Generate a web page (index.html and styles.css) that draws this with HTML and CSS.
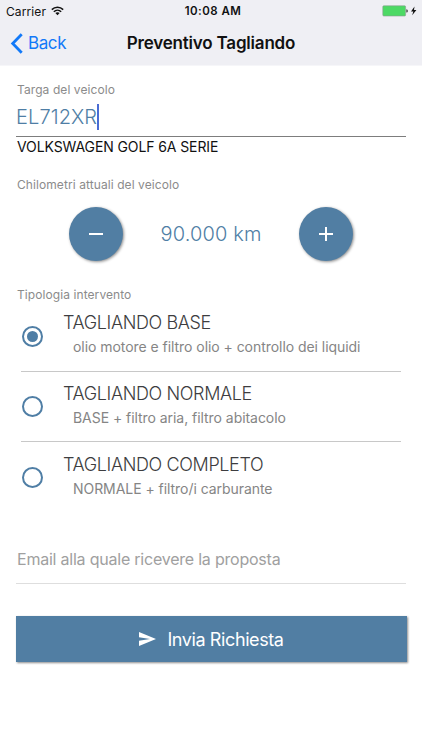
FILE: index.html
```html
<!DOCTYPE html>
<html lang="it">

<head>
    <meta charset="UTF-8">
    <meta name="viewport" content="width=device-width, initial-scale=1.0">
    <title>Preventivo Tagliando</title>
    <link rel="stylesheet" href="styles.css">
</head>

<body>

    <!-- Header -->
    <header class="header">
        <div class="status-bar">
            <div class="status-left">
                <span class="carrier">Carrier</span>
                <svg class="wifi" width="13" height="10" viewBox="0 0 13 10">
                    <path d="M0.8 3.6C4 0.4 9 0.4 12.2 3.6M2.8 5.7C4.9 3.7 8.1 3.7 10.2 5.7" fill="none" stroke="#111" stroke-width="1.5" />
                    <path d="M6.5 9.2L4.4 7.1C5.6 6 7.4 6 8.6 7.1Z" fill="#111" />
                </svg>
            </div>
            <span class="clock">10:08 AM</span>
            <svg class="battery" width="36" height="12" viewBox="0 0 36 12">
                <rect x="0.8" y="0.8" width="22.8" height="10.2" rx="1" fill="#4cd964" stroke="#8b9a90" stroke-width="0.6" />
                <path d="M24.4 4.2Q25.8 4.4 25.8 5.9T24.4 7.6Z" fill="#333" />
                <path d="M32.5 1.4L29 6.4H31.3L30.2 10.2L34.4 5.1H32Z" fill="#111" />
            </svg>
        </div>
        <div class="nav-bar">
            <a class="back" href="#">
                <svg width="13" height="21" viewBox="0 0 13 21">
                    <path d="M11.7 1.3L2.7 10.5L11.7 19.7" fill="none" stroke="#1279f8" stroke-width="2.8" />
                </svg>
                <span>Back</span>
            </a>
            <h1 class="title">Preventivo Tagliando</h1>
        </div>
    </header>

    <main class="content">

        <!-- Plate -->
        <p class="label label-plate">Targa del veicolo</p>
        <div class="plate-field">
            <span class="plate">EL712XR</span><span class="cursor"></span>
        </div>
        <p class="vehicle">VOLKSWAGEN GOLF 6A SERIE</p>

        <!-- Kilometers -->
        <p class="label label-km">Chilometri attuali del veicolo</p>
        <div class="km-row">
            <button class="round-btn" aria-label="Meno">
                <svg width="16" height="16" viewBox="0 0 16 16">
                    <path d="M1 8H15" stroke="#fff" stroke-width="2" />
                </svg>
            </button>
            <span class="km">90.000 km</span>
            <button class="round-btn" aria-label="Più">
                <svg width="16" height="16" viewBox="0 0 16 16">
                    <path d="M1 8H15M8 1V15" stroke="#fff" stroke-width="2" />
                </svg>
            </button>
        </div>

        <!-- Service type -->
        <p class="label label-type">Tipologia intervento</p>
        <ul class="options">
            <li class="option">
                <span class="radio checked"></span>
                <div class="option-text">
                    <p class="option-title">TAGLIANDO BASE</p>
                    <p class="option-desc">olio motore e filtro olio + controllo dei liquidi</p>
                </div>
            </li>
            <li class="option">
                <span class="radio"></span>
                <div class="option-text">
                    <p class="option-title">TAGLIANDO NORMALE</p>
                    <p class="option-desc">BASE + filtro aria, filtro abitacolo</p>
                </div>
            </li>
            <li class="option">
                <span class="radio"></span>
                <div class="option-text">
                    <p class="option-title">TAGLIANDO COMPLETO</p>
                    <p class="option-desc">NORMALE + filtro/i carburante</p>
                </div>
            </li>
        </ul>

        <!-- Email -->
        <div class="email-field">
            <span class="email">Email alla quale ricevere la proposta</span>
        </div>

        <button class="submit">
            <svg width="17" height="14" viewBox="0 0 17 14">
                <path d="M0 0L17 7L0 14V8.7L11 7L0 5.3Z" fill="#fff" />
            </svg>
            <span class="submit-text">Invia Richiesta</span>
        </button>
    </main>

</body>

</html>
```

FILE: styles.css
```css
* {
    margin: 0;
    padding: 0;
    box-sizing: border-box;
}

body {
    height: 750px;
    overflow: hidden;
    background: #fff;
    font-family: Inter, "Liberation Sans", sans-serif;
    white-space: nowrap;
}

svg {
    display: block;
    flex: none;
}

/* Header */
.header {
    height: 66px;
    background: #efeff4;
    border-bottom: 1px solid #f6f6f9;
}

.status-bar {
    display: grid;
    grid-template-columns: 1fr auto 1fr;
    align-items: center;
    height: 22px;
    padding: 0 4px 0 6px;
    font-size: 12px;
    color: #111;
}

.status-left {
    display: flex;
    align-items: center;
    gap: 5px;
}

.carrier {
    letter-spacing: 0.1px;
}

.clock {
    padding-left: 2px;
    font-size: 11.5px;
    font-weight: 600;
    letter-spacing: 0.45px;
}

.battery {
    justify-self: end;
}

.nav-bar {
    display: grid;
    grid-template-columns: 1fr auto 1fr;
    align-items: center;
    height: 43px;
    padding: 0 10px;
}

.back {
    display: flex;
    align-items: center;
    gap: 5px;
    margin-top: -1px;
    color: #1279f8;
    font-size: 17px;
    letter-spacing: -0.4px;
    text-decoration: none;
}

.title {
    margin-top: -1px;
    font-size: 17px;
    font-weight: 600;
    letter-spacing: -0.2px;
    color: #111;
}

/* Form */
.content {
    padding: 0 16px;
}

.label {
    height: 20px;
    padding-left: 1px;
    font-size: 12px;
    line-height: 21px;
    letter-spacing: 0.08px;
    color: #8b8b8b;
}

.label-plate {
    margin-top: 13px;
}

.plate-field {
    display: flex;
    align-items: center;
    height: 38px;
    padding-bottom: 2px;
    border-bottom: 1px solid #7d7d7d;
}

.plate {
    font-size: 20px;
    font-weight: 350;
    letter-spacing: 0.1px;
    color: #4f7ea5;
}

.cursor {
    width: 2px;
    height: 26px;
    background: #4a6cd4;
}

.vehicle {
    height: 20px;
    padding-left: 1px;
    font-size: 14px;
    line-height: 20px;
    letter-spacing: -0.1px;
    color: #111;
}

.label-km {
    margin-top: 17px;
}

.km-row {
    display: flex;
    align-items: center;
    justify-content: space-between;
    height: 54px;
    margin-top: 13px;
    padding: 0 53px;
}

.round-btn {
    display: flex;
    align-items: center;
    justify-content: center;
    width: 54px;
    height: 54px;
    border: none;
    border-radius: 50%;
    background: #517ea3;
    box-shadow: 1px 1px 3px rgba(0, 0, 0, 0.45);
}

.km {
    font-size: 20px;
    font-weight: 350;
    letter-spacing: 0.15px;
    color: #4f7ea5;
}

.label-type {
    margin-top: 23px;
}

.options {
    list-style: none;
    padding: 0 5px;
}

.option {
    display: flex;
    align-items: center;
    gap: 20px;
    height: 70.5px;
    border-bottom: 1px solid #c8c8c8;
}

.option:first-child {
    height: 67.5px;
    padding-bottom: 5px;
}

.option:first-child .radio {
    margin-top: 4px;
}

.option:last-child {
    border-bottom: none;
}

.radio {
    display: flex;
    align-items: center;
    justify-content: center;
    flex: none;
    width: 21px;
    height: 21px;
    margin-left: 1px;
    border: 2px solid #4f7ea5;
    border-radius: 50%;
}

.checked::after {
    content: "";
    width: 11px;
    height: 11px;
    border-radius: 50%;
    background: #4f7ea5;
}

.option-title {
    font-size: 18px;
    font-weight: 350;
    line-height: 24px;
    letter-spacing: -0.37px;
    color: #3d3d40;
}

.option-desc {
    padding-left: 10px;
    font-size: 14px;
    line-height: 24px;
    letter-spacing: -0.05px;
    color: #858585;
}

.email-field {
    display: flex;
    align-items: center;
    height: 48px;
    margin-top: 23px;
    border-bottom: 1px solid #dedede;
}

.email {
    padding-left: 1px;
    font-size: 16px;
    letter-spacing: -0.22px;
    color: #a0a0a0;
}

.submit {
    display: flex;
    align-items: center;
    justify-content: center;
    gap: 11px;
    width: 391px;
    height: 46px;
    margin-top: 32px;
    border: none;
    background: #517ea3;
    box-shadow: 1px 1px 2px rgba(0, 0, 0, 0.45);
    color: #fff;
    font-family: inherit;
    font-size: 18px;
    letter-spacing: -0.4px;
}

.submit-text {
    padding-top: 1px;
}
```
